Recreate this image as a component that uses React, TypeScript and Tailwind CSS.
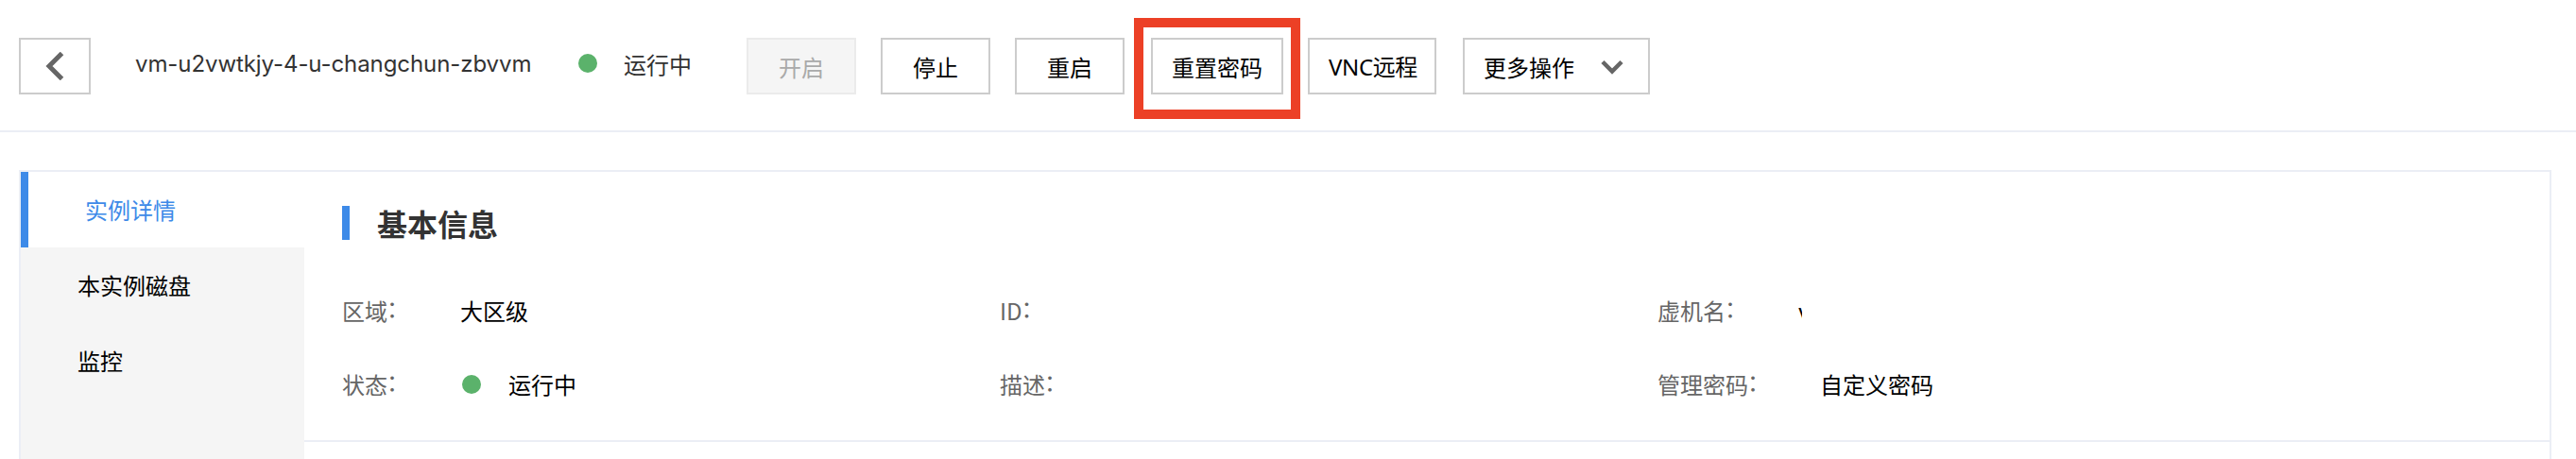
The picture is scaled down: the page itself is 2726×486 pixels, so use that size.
import type { ReactNode } from 'react'

const actions = [
  { label: '停止', className: 'ml-[26px] w-[116px]' },
  { label: '重启', className: 'ml-[26px] w-[116px]' },
  { label: '重置密码', className: 'ml-7 w-[140px]', highlight: true },
  { label: 'VNC远程', className: "ml-[26px] w-[136px] pl-0.5 font-['Noto_Sans','Noto_Sans_CJK_SC',sans-serif] tracking-[-0.4px]" },
]

const tabs = ['本实例磁盘', '监控']

function Dot({ className }: { className?: string }) {
  return <span className={`size-5 shrink-0 rounded-full bg-[#5bb26b] ${className ?? ''}`} />
}

function Field({ label, className, children }: { label: string; className?: string; children?: ReactNode }) {
  return (
    <div className="flex w-[696px] items-center">
      <span className={`shrink-0 text-[#666] ${className ?? ''}`}>
        {label}
        <span className="-ml-px align-[3px] leading-none">：</span>
      </span>
      {children}
    </div>
  )
}

function Header() {
  return (
    <header className="flex h-[140px] items-start border-b-2 border-[#ebeef5] pt-10 pl-5">
      <button className="flex h-[60px] w-[76px] items-center justify-center border-2 border-[#ccc]">
        <svg width="20" height="30" viewBox="0 0 20 30" fill="none" stroke="#666" strokeWidth="5">
          <path d="M17.5 1.5 4 15l13.5 13.5" />
        </svg>
      </button>
      <span className="ml-[47px] w-[469px] font-[Inter,'Noto_Sans_CJK_SC',sans-serif] leading-[56px] tracking-[-0.08px] text-[#333]">
        vm-u2vwtkjy-4-u-changchun-zbvvm
      </span>
      <Dot className="mt-[17px]" />
      <span className="ml-7 w-[130px] leading-[55px] text-[#333]">运行中</span>
      <button disabled className="h-[60px] w-[116px] border-2 border-[#ebebeb] bg-[#f5f5f5] pt-0.5 text-[#aaa]">
        开启
      </button>
      {actions.map((action) => (
        <button key={action.label} className={`relative h-[60px] border-2 border-[#ccc] pt-0.5 ${action.className}`}>
          {action.label}
          {action.highlight && (
            <span className="absolute -top-[23px] -left-5 h-[107px] w-[176px] border-10 border-[#ec4026]" />
          )}
        </button>
      ))}
      <button className="ml-7 flex h-[60px] w-[198px] items-center border-2 border-[#ccc] pl-5">
        <span className="pt-0.5">更多操作</span>
        <svg className="ml-[28px] mt-0.5" width="24" height="16" viewBox="0 0 24 16" fill="none" stroke="#666" strokeWidth="4.5">
          <path d="M2 2.5 12 12.5 22 2.5" />
        </svg>
      </button>
    </header>
  )
}

export default function App() {
  return (
    <div className="h-[486px] overflow-hidden bg-white font-['Noto_Sans_CJK_SC',sans-serif] text-2xl text-black">
      <Header />
      <main className="mt-10 mr-[26px] ml-5 flex h-[400px] border-2 border-[#ebeef5]">
        <nav className="w-[300px] shrink-0 bg-[#f5f5f5] leading-[79px]">
          <div className="h-20 border-l-8 border-[#3d8ae8] bg-white pl-[60px] text-[#3d8ae8]">实例详情</div>
          {tabs.map((tab) => (
            <div key={tab} className="h-20 pl-[60px]">{tab}</div>
          ))}
        </nav>
        <section className="flex-1">
          <div className="h-[286px] border-b-2 border-[#ebeef5] pt-9 pl-10">
            <h2 className="flex h-9 items-center border-l-8 border-[#3d8ae8] pl-[29px] text-[32px] font-bold text-[#333]">
              基本信息
            </h2>
            <div className="mt-[35px] flex h-20 items-center">
              <Field label="区域" className="w-[125px]">大区级</Field>
              <Field label="ID" />
              <Field label="虚机名" className="w-[149px]">
                {/* value is cut off after its first stroke */}
                <span className="w-1 overflow-hidden">v</span>
              </Field>
            </div>
            <div className="-mt-0.5 flex h-20 items-center">
              <Field label="状态" className="w-[127px]">
                <Dot />
                <span className="ml-[29px]">运行中</span>
              </Field>
              <Field label="描述" />
              <Field label="管理密码" className="w-[172px]">自定义密码</Field>
            </div>
          </div>
        </section>
      </main>
    </div>
  )
}
